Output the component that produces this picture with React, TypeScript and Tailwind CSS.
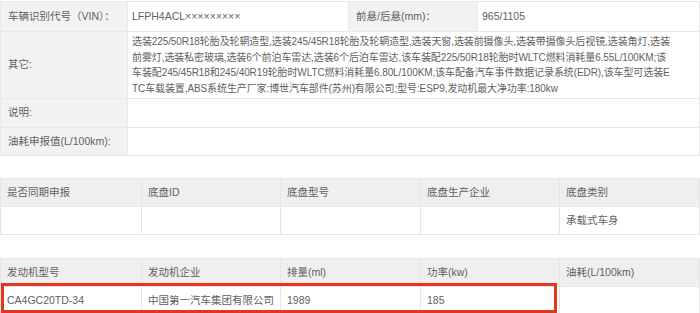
import React from "react";

const font = {
  fontFamily: '"Liberation Sans", "Noto Sans CJK SC", sans-serif',
};

const otherLines = [
  "选装225/50R18轮胎及轮辋造型,选装245/45R18轮胎及轮辋造型,选装天窗,选装前摄像头,选装带摄像头后视镜,选装角灯,选装",
  "前雾灯,选装私密玻璃,选装6个前泊车雷达,选装6个后泊车雷达,该车装配225/50R18轮胎时WLTC燃料消耗量6.55L/100KM;该",
  "车装配245/45R18和245/40R19轮胎时WLTC燃料消耗量6.80L/100KM,该车配备汽车事件数据记录系统(EDR),该车型可选装E",
  "TC车载装置,ABS系统生产厂家:博世汽车部件(苏州)有限公司;型号:ESP9,发动机最大净功率:180kw",
];

const chassisHead = ["是否同期申报", "底盘ID", "底盘型号", "底盘生产企业", "底盘类别"];
const chassisRow = ["", "", "", "", "承载式车身"];
const engineHead = ["发动机型号", "发动机企业", "排量(ml)", "功率(kw)", "油耗(L/100km)"];
const engineRow = ["CA4GC20TD-34", "中国第一汽车集团有限公司", "1989", "185", ""];

const label = "bg-[#f2f2f2] border border-[#e9e9e9] pl-[7px] text-left align-middle font-normal";
const value = "bg-white border border-[#e9e9e9] pl-[4px] text-left align-middle";

function GridTable({ head, row }: { head: string[]; row: string[] }) {
  return (
    <table className="w-full table-fixed border-collapse">
      <colgroup>
        <col className="w-[141px]" />
        <col className="w-[139px]" />
        <col className="w-[140px]" />
        <col className="w-[139px]" />
        <col />
      </colgroup>
      <thead>
        <tr className="h-[28px]">
          {head.map((h) => (
            <th key={h} className="bg-[#efefef] border border-[#e6e6e6] pl-[6px] text-left font-normal">
              {h}
            </th>
          ))}
        </tr>
      </thead>
      <tbody>
        <tr className="h-[28px]">
          {row.map((c, i) => (
            <td key={i} className="bg-white border border-[#e6e6e6] pl-[6px]">
              {c}
            </td>
          ))}
        </tr>
      </tbody>
    </table>
  );
}

export default function App() {
  return (
    <div className="w-[700px] h-[313px] bg-white text-[10.5px] text-[#5f5f5f] overflow-hidden pt-px" style={font}>
      {/* vehicle info */}
      <table className="w-full table-fixed border-collapse">
        <colgroup>
          <col className="w-[127px]" />
          <col className="w-[221px]" />
          <col className="w-[129px]" />
          <col />
        </colgroup>
        <tbody>
          <tr className="h-[30px]">
            <th className={label}>车辆识别代号（VIN）：</th>
            <td className={value}>LFPH4ACL×××××××××</td>
            <th className={label}>前悬/后悬(mm)：</th>
            <td className={value}>965/1105</td>
          </tr>
          <tr className="h-[67px]">
            <th className={label}>其它:</th>
            <td colSpan={3} className={`${value} text-[10px] tracking-[-0.1px] leading-[15.5px] whitespace-nowrap`}>
              {otherLines.map((l) => (
                <div key={l}>{l}</div>
              ))}
            </td>
          </tr>
          <tr className="h-[29px]">
            <th className={label}>说明:</th>
            <td colSpan={3} className={value}></td>
          </tr>
          <tr className="h-[28px]">
            <th className={label}>油耗申报值(L/100km):</th>
            <td colSpan={3} className={value}></td>
          </tr>
        </tbody>
      </table>

      <div className="mt-[22px]">
        <GridTable head={chassisHead} row={chassisRow} />
      </div>

      <div className="relative mt-[23px]">
        <GridTable head={engineHead} row={engineRow} />
        <div className="absolute left-px top-[25px] w-[556px] h-[30px] border-[3px] border-[#e2361f]" />
      </div>
    </div>
  );
}
